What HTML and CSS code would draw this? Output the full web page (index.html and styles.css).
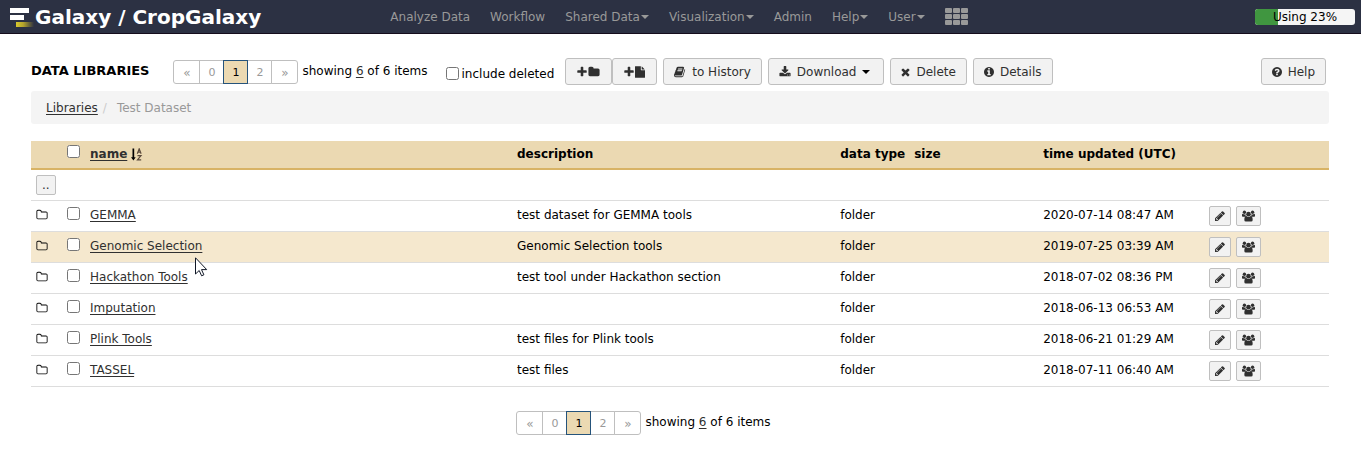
FILE: index.html
```html
<!DOCTYPE html>
<html lang="en">
<head>
<meta charset="utf-8">
<title>Galaxy / CropGalaxy</title>
<link rel="stylesheet" href="styles.css">
</head>
<body>
<svg class="sprite" aria-hidden="true">
  <symbol id="plus" viewBox="192 0 1408 1792"><path d="M1600 736v192q0 40-28 68t-68 28h-416v416q0 40-28 68t-68 28h-192q-40 0-68-28t-28-68v-416h-416q-40 0-68-28t-28-68v-192q0-40 28-68t68-28h416v-416q0-40 28-68t68-28h192q40 0 68 28t28 68v416h416q40 0 68 28t28 68z"/></symbol>
  <symbol id="folder" viewBox="0 0 1792 1792"><path d="M1728 608v704q0 92-66 158t-158 66h-1216q-92 0-158-66t-66-158v-960q0-92 66-158t158-66h320q92 0 158 66t66 158v32h672q92 0 158 66t66 158z"/></symbol>
  <symbol id="folder-o" viewBox="0 0 1792 1792"><path d="M1600 1312v-704q0-40-28-68t-68-28h-704q-40 0-68-28t-28-68v-64q0-40-28-68t-68-28h-320q-40 0-68 28t-28 68v960q0 40 28 68t68 28h1216q40 0 68-28t28-68zm128-704v704q0 92-66 158t-158 66h-1216q-92 0-158-66t-66-158v-960q0-92 66-158t158-66h320q92 0 158 66t66 158v32h672q92 0 158 66t66 158z"/></symbol>
  <symbol id="file" viewBox="128 0 1536 1792"><path d="M1152 512v-472q22 14 36 28l408 408q14 14 28 36h-472zm-128 32q0 40 28 68t68 28h544v1056q0 40-28 68t-68 28h-1344q-40 0-68-28t-28-68v-1600q0-40 28-68t68-28h800v544z"/></symbol>
  <symbol id="book" viewBox="0 0 1792 1792"><path d="M1639 478q40 57 18 129l-275 906q-19 64-76.5 107.5t-122.5 43.5h-923q-77 0-148.5-53.5t-99.5-131.5q-24-67-2-127 0-4 3-27t4-37q1-8-3-21.5t-3-19.5q2-11 8-21t16.5-23.5 16.5-23.5q23-38 45-91.5t30-91.5q3-10 .5-30t-.5-28q3-11 17-28t17-23q21-36 42-92t25-90q1-9-2.5-32t.5-28q4-13 22-30.5t22-22.5q19-26 42.5-84.5t27.5-96.5q1-8-3-25.5t-2-26.5q2-8 9-18t18-23 17-21q8-12 16.5-30.5t15-35 16-36 19.5-32 26.5-23.5 36-11.5 47.5 5.5l-1 3q38-9 51-9h761q74 0 114 56t18 130l-274 906q-36 119-71.5 153.5t-128.5 34.5h-869q-27 0-38 15-11 16-1 43 24 70 144 70h923q29 0 56-15.5t35-41.5l300-987q7-22 5-57 38 15 59 43zm-1064 2q-4 13 2 22.5t20 9.5h608q13 0 25.5-9.5t16.5-22.5l21-64q4-13-2-22.5t-20-9.5h-608q-13 0-25.5 9.5t-16.5 22.5zm-83 256q-4 13 2 22.5t20 9.5h608q13 0 25.5-9.5t16.5-22.5l21-64q4-13-2-22.5t-20-9.5h-608q-13 0-25.5 9.5t-16.5 22.5z"/></symbol>
  <symbol id="download" viewBox="0 0 1792 1792"><path d="M1344 1344q0-26-19-45t-45-19-45 19-19 45 19 45 45 19 45-19 19-45zm256 0q0-26-19-45t-45-19-45 19-19 45 19 45 45 19 45-19 19-45zm128-224v320q0 40-28 68t-68 28h-1472q-40 0-68-28t-28-68v-320q0-40 28-68t68-28h465l135 136q58 56 136 56t136-56l136-136h464q40 0 68 28t28 68zm-325-569q17 41-14 70l-448 448q-18 19-45 19t-45-19l-448-448q-31-29-14-70 17-39 59-39h256v-448q0-26 19-45t45-19h256q26 0 45 19t19 45v448h256q42 0 59 39z"/></symbol>
  <symbol id="times" viewBox="224 0 1344 1792"><path d="M1490 1322q0 40-28 68l-136 136q-28 28-68 28t-68-28l-294-294-294 294q-28 28-68 28t-68-28l-136-136q-28-28-28-68t28-68l294-294-294-294q-28-28-28-68t28-68l136-136q28-28 68-28t68 28l294 294 294-294q28-28 68-28t68 28l136 136q28 28 28 68t-28 68l-294 294 294 294q28 28 28 68z"/></symbol>
  <symbol id="info" viewBox="128 0 1536 1792"><path d="M1152 1376v-160q0-14-9-23t-23-9h-96v-512q0-14-9-23t-23-9h-320q-14 0-23 9t-9 23v160q0 14 9 23t23 9h96v320h-96q-14 0-23 9t-9 23v160q0 14 9 23t23 9h448q14 0 23-9t9-23zm-128-896v-160q0-14-9-23t-23-9h-192q-14 0-23 9t-9 23v160q0 14 9 23t23 9h192q14 0 23-9t9-23zm640 416q0 209-103 385.500t-279.500 279.500-385.500 103-385.500-103-279.500-279.500-103-385.500 103-385.500 279.500-279.500 385.500-103 385.500 103 279.500 279.500 103 385.500z"/></symbol>
  <symbol id="question" viewBox="128 0 1536 1792"><path d="M1024 1376v-192q0-14-9-23t-23-9h-192q-14 0-23 9t-9 23v192q0 14 9 23t23 9h192q14 0 23-9t9-23zm256-672q0-88-55.500-163t-138.500-116-170-41q-243 0-371 213-15 24 8 42l132 100q7 6 19 6 16 0 25-12 53-68 86-92 34-24 86-24 48 0 85.500 26t37.500 59q0 38-20 61t-68 45q-63 28-115.500 86.500t-52.500 125.500v36q0 14 9 23t23 9h192q14 0 23-9t9-23q0-19 21.500-49.500t54.500-49.500q32-18 49-28.500t46-35 44.500-48 28-60.500 12.500-81zm384 192q0 209-103 385.500t-279.500 279.500-385.500 103-385.500-103-279.500-279.500-103-385.500 103-385.500 279.500-279.500 385.500-103 385.500 103 279.500 279.500 103 385.500z"/></symbol>
  <symbol id="pencil" viewBox="128 0 1536 1792"><path d="M491 1536l91-91-235-235-91 91v107h128v128h107zm523-928q0-22-22-22-10 0-17 7l-542 542q-7 7-7 17 0 22 22 22 10 0 17-7l542-542q7-7 7-17zm-54-192l416 416-832 832h-416v-416zm683 96q0 53-37 90l-166 166-416-416 166-165q36-38 90-38 53 0 91 38l235 234q37 39 37 91z"/></symbol>
  <symbol id="group" viewBox="0 0 14 12"><circle cx="2.600" cy="2" r="1.800"/><circle cx="11.400" cy="2" r="1.800"/><path d="M0 6.200V5q0-1.300.8-1.300.9.700 2 .7l1.100-.2q-.3 1.400.4 2.500H1Q0 6.700 0 6.200zM14 6.200V5q0-1.300-.8-1.300-.9.700-2 .7l-1.100-.2q.3 1.400-.4 2.500H13q1 0 1-.5z"/><circle cx="7" cy="4" r="2.500"/><path d="M2.500 10.200Q2.500 6 4.700 6 5.700 7 7 7t2.300-1q2.200 0 2.200 4.200 0 1.800-1.700 1.800H4.200q-1.700 0-1.700-1.800z"/></symbol>
  <symbol id="grid" viewBox="0 0 23 17"><rect width="7" height="5" rx="1"/><rect x="8" width="7" height="5" rx="1"/><rect x="16" width="7" height="5" rx="1"/><rect y="6" width="7" height="5" rx="1"/><rect x="8" y="6" width="7" height="5" rx="1"/><rect x="16" y="6" width="7" height="5" rx="1"/><rect y="12" width="7" height="5" rx="1"/><rect x="8" y="12" width="7" height="5" rx="1"/><rect x="16" y="12" width="7" height="5" rx="1"/></symbol>
  <symbol id="sort" viewBox="0 0 12 13"><path d="M1.500.5h1.700v8.800h1.500L2.400 12.500 0 9.300h1.500z"/><path class="stroke" d="M6.300 5.700 8.200.8l1.900 4.900M7 4.200h2.500M6.500 7.600H10L6.500 11.900H10.200"/></symbol>
</svg>

<header class="masthead">
  <a class="brand" href="#">
    <svg class="logo" viewBox="0 0 26 20" aria-hidden="true">
      <defs><linearGradient id="tail"><stop offset="0" stop-color="#d9c92e"/><stop offset=".4" stop-color="#b5a42c"/><stop offset="1" stop-color="#2c3143"/></linearGradient></defs>
      <path fill="#fff" d="M1 0h19v5H1zM1 7h14v5H1z"/><path fill="url(#tail)" d="M7 14h18v5H7z"/>
    </svg><span>Galaxy / CropGalaxy</span>
  </a>
  <nav class="menu">
    <a href="#">Analyze Data</a>
    <a href="#">Workflow</a>
    <a href="#">Shared Data<i class="caret"></i></a>
    <a href="#">Visualization<i class="caret"></i></a>
    <a href="#">Admin</a>
    <a href="#">Help<i class="caret"></i></a>
    <a href="#">User<i class="caret"></i></a>
    <a href="#" aria-label="Apps"><svg class="apps"><use href="#grid"/></svg></a>
  </nav>
  <div class="quota"><div class="quota-fill" style="width:23%"></div><span class="quota-text">Using 23%</span></div>
</header>

<main class="page">
  <div class="toolbar">
    <h1>DATA LIBRARIES</h1>
    <div class="pager">
      <div class="pages"><a href="#">«</a><a href="#">0</a><a href="#" class="current">1</a><a href="#">2</a><a href="#">»</a></div>
      <span class="count">showing <a href="#">6</a> of 6 items</span>
    </div>
    <label class="deleted"><input type="checkbox">include deleted</label>
    <div class="buttons">
      <div class="joined">
        <button class="btn" aria-label="Create folder"><svg class="icon mid"><use href="#plus"/></svg><svg class="icon"><use href="#folder"/></svg></button><button class="btn" aria-label="Add file"><svg class="icon mid"><use href="#plus"/></svg><svg class="icon mid"><use href="#file"/></svg></button>
      </div>
      <button class="btn"><svg class="icon"><use href="#book"/></svg><span>to History</span></button>
      <button class="btn"><svg class="icon"><use href="#download"/></svg><span>Download</span><i class="caret"></i></button>
      <button class="btn"><svg class="icon narrow"><use href="#times"/></svg><span>Delete</span></button>
      <button class="btn"><svg class="icon mid"><use href="#info"/></svg><span>Details</span></button>
    </div>
    <button class="btn help"><svg class="icon mid"><use href="#question"/></svg><span>Help</span></button>
  </div>

  <nav class="breadcrumb"><a href="#">Libraries</a><span class="slash">/</span><span>Test Dataset</span></nav>

  <table class="grid">
    <colgroup><col class="c-icon"><col class="c-check"><col class="c-name"><col class="c-desc"><col class="c-type"><col class="c-size"><col class="c-time"><col></colgroup>
    <thead>
      <tr><th></th><th><input type="checkbox" aria-label="Select all"></th><th><a href="#">name</a> <svg class="sort"><use href="#sort"/></svg></th><th>description</th><th>data type</th><th>size</th><th>time updated (UTC)</th><th></th></tr>
    </thead>
    <tbody>
      <tr><td colspan="8" class="tools"><button class="mini up">..</button></td></tr>
      <tr><td><svg class="icon"><use href="#folder-o"/></svg></td><td><input type="checkbox" aria-label="Select GEMMA"></td><td><a href="#">GEMMA</a></td><td>test dataset for GEMMA tools</td><td>folder</td><td></td><td>2020-07-14 08:47 AM</td><td class="tools"><div class="actions"><button class="mini" aria-label="Edit"><svg class="icon mid"><use href="#pencil"/></svg></button><button class="mini" aria-label="Permissions"><svg class="people"><use href="#group"/></svg></button></div></td></tr>
      <tr class="hover"><td><svg class="icon"><use href="#folder-o"/></svg></td><td><input type="checkbox" aria-label="Select Genomic Selection"></td><td><a href="#">Genomic Selection</a></td><td>Genomic Selection tools</td><td>folder</td><td></td><td>2019-07-25 03:39 AM</td><td class="tools"><div class="actions"><button class="mini" aria-label="Edit"><svg class="icon mid"><use href="#pencil"/></svg></button><button class="mini" aria-label="Permissions"><svg class="people"><use href="#group"/></svg></button></div></td></tr>
      <tr><td><svg class="icon"><use href="#folder-o"/></svg></td><td><input type="checkbox" aria-label="Select Hackathon Tools"></td><td><a href="#">Hackathon Tools</a></td><td>test tool under Hackathon section</td><td>folder</td><td></td><td>2018-07-02 08:36 PM</td><td class="tools"><div class="actions"><button class="mini" aria-label="Edit"><svg class="icon mid"><use href="#pencil"/></svg></button><button class="mini" aria-label="Permissions"><svg class="people"><use href="#group"/></svg></button></div></td></tr>
      <tr><td><svg class="icon"><use href="#folder-o"/></svg></td><td><input type="checkbox" aria-label="Select Imputation"></td><td><a href="#">Imputation</a></td><td></td><td>folder</td><td></td><td>2018-06-13 06:53 AM</td><td class="tools"><div class="actions"><button class="mini" aria-label="Edit"><svg class="icon mid"><use href="#pencil"/></svg></button><button class="mini" aria-label="Permissions"><svg class="people"><use href="#group"/></svg></button></div></td></tr>
      <tr><td><svg class="icon"><use href="#folder-o"/></svg></td><td><input type="checkbox" aria-label="Select Plink Tools"></td><td><a href="#">Plink Tools</a></td><td>test files for Plink tools</td><td>folder</td><td></td><td>2018-06-21 01:29 AM</td><td class="tools"><div class="actions"><button class="mini" aria-label="Edit"><svg class="icon mid"><use href="#pencil"/></svg></button><button class="mini" aria-label="Permissions"><svg class="people"><use href="#group"/></svg></button></div></td></tr>
      <tr><td><svg class="icon"><use href="#folder-o"/></svg></td><td><input type="checkbox" aria-label="Select TASSEL"></td><td><a href="#">TASSEL</a></td><td>test files</td><td>folder</td><td></td><td>2018-07-11 06:40 AM</td><td class="tools"><div class="actions"><button class="mini" aria-label="Edit"><svg class="icon mid"><use href="#pencil"/></svg></button><button class="mini" aria-label="Permissions"><svg class="people"><use href="#group"/></svg></button></div></td></tr>
    </tbody>
  </table>

  <div class="pager bottom">
    <div class="pages"><a href="#">«</a><a href="#">0</a><a href="#" class="current">1</a><a href="#">2</a><a href="#">»</a></div>
    <span class="count">showing <a href="#">6</a> of 6 items</span>
  </div>
</main>
<svg class="pointer" viewBox="0 0 13 20" aria-hidden="true"><path d="M.5.800v16.200l3.700-3.500 2.400 5.300 2.300-1-2.400-5.200h5.200z"/></svg>
</body>
</html>
```
FILE: styles.css
```css
* { box-sizing: border-box; }
body {
  margin: 0;
  background: #fff;
  color: #000;
  font: 12px/18px Verdana, "DejaVu Sans", sans-serif;
}
a { color: #303030; text-underline-offset: 2px; }
button { font: inherit; color: #303030; cursor: pointer; }
input[type="checkbox"] { width: 13px; height: 13px; margin: 0; flex: none; }
svg { fill: currentColor; flex: none; }
.sprite { position: absolute; width: 0; height: 0; }
.stroke { fill: none; stroke: #5b4a3c; stroke-width: 1.2; }
.icon { width: 12px; height: 12px; display: block; }
.mid { width: 10px; }
.narrow { width: 9px; }
.caret {
  display: inline-block;
  border: 4px solid transparent;
  border-top-color: currentColor;
  border-bottom: 0;
  vertical-align: middle;
}

.masthead {
  display: grid;
  grid-template-columns: 1fr auto 1fr;
  align-items: center;
  height: 34px;
  padding: 0 6px 0 9px;
  background: #2c3143;
  border-bottom: 1px solid #150d1c;
}
.brand {
  display: flex;
  align-items: center;
  color: #fff;
  font-size: 20px;
  font-weight: bold;
  line-height: 32px;
  text-decoration: none;
  white-space: nowrap;
}
.logo { width: 26px; height: 20px; margin-top: 3px; }
.menu { display: flex; align-items: center; margin-right: 6px; }
.menu a {
  padding: 0 10px;
  color: #999;
  text-decoration: none;
  white-space: nowrap;
}
.menu .caret { margin-left: 1px; }
.apps { display: block; width: 23px; height: 17px; }
.quota {
  position: relative;
  justify-self: end;
  width: 100px;
  height: 16px;
  overflow: hidden;
  border-radius: 3px;
  background: #f5f5f5;
}
.quota-fill { height: 100%; background: #409640; }
.quota-text {
  position: absolute;
  inset: 0;
  line-height: 17px;
  text-align: center;
}

.page { padding: 24px 32px 0 31px; }
.toolbar { display: flex; align-items: center; height: 27px; white-space: nowrap; }
h1 { margin: 0 24px 0 0; padding-bottom: 2px; font-size: 13px; line-height: 18px; }
.pager { display: flex; align-items: center; gap: 4px; }
.pages { display: flex; }
.pages a {
  min-width: 25px;
  padding: 3px 8px 1px;
  border: 1px solid #bfbfbf;
  margin-left: -1px;
  background: #fff;
  color: #999;
  font-size: 11px;
  text-align: center;
  text-decoration: none;
}
.pages a:first-child, .pages a:last-child { min-width: 27px; font-size: 12px; }
.pages a:first-child { margin-left: 0; border-radius: 3px 0 0 3px; }
.pages a:last-child { border-radius: 0 3px 3px 0; }
.pages .current { position: relative; border-color: #25537b; background: #ebd9b2; color: #000; }
.count { padding-bottom: 2px; }
.deleted { display: flex; align-items: center; gap: 3px; margin-left: 18px; padding-top: 4px; }
.buttons { display: flex; gap: 6px; margin-left: 11px; }
.joined { display: flex; }
.btn {
  display: flex;
  align-items: center;
  gap: 6px;
  height: 27px;
  padding: 0 10px;
  border: 1px solid #bfbfbf;
  border-radius: 3px;
  background: #f2f2f2;
}
.joined .btn { gap: 1px; padding: 0 11px; }
.btn .caret { margin-right: 3px; color: #000; }
.help { margin-left: auto; margin-right: 3px; }

.breadcrumb {
  display: flex;
  margin-top: 6px;
  padding: 8px 15px 7px;
  border-radius: 3px;
  background: #f4f4f4;
  color: #999;
}
.slash { padding: 0 10px 0 5px; color: #ccc; }

.grid {
  width: 100%;
  margin-top: 17px;
  border-collapse: separate;
  border-spacing: 0;
  table-layout: fixed;
}
.c-icon { width: 31px; }
.c-check { width: 23px; }
.c-name { width: 32.9%; }
.c-desc { width: 24.9%; }
.c-type { width: 74px; }
.c-size { width: 129px; }
.c-time { width: 166px; }
.grid th, .grid td { padding: 0 5px 2px; text-align: left; white-space: nowrap; }
.grid .tools { padding-bottom: 0; }
.grid th {
  height: 29px;
  border-bottom: 2px solid #d8b365;
  background: #ebd9b2;
}
.grid td { height: 31px; border-bottom: 1px solid #ddd; }
.grid td input, .grid th input { display: block; margin-bottom: 4px; }
.grid .hover td { background: #f5e8ce; }
.sort { width: 12px; height: 13px; vertical-align: middle; }
.actions { display: flex; gap: 5px; }
.mini {
  display: flex;
  align-items: center;
  justify-content: center;
  height: 20px;
  padding: 0 5px;
  border: 1px solid #bfbfbf;
  border-radius: 2px;
  background: #f2f2f2;
}
.people { width: 13px; height: 12px; display: block; }
.bottom { justify-content: center; margin-top: 24px; padding-right: 73px; }

.pointer {
  position: absolute;
  left: 195px;
  top: 257px;
  width: 13px;
  height: 20px;
  fill: #fff;
  stroke: #111827;
}
```
